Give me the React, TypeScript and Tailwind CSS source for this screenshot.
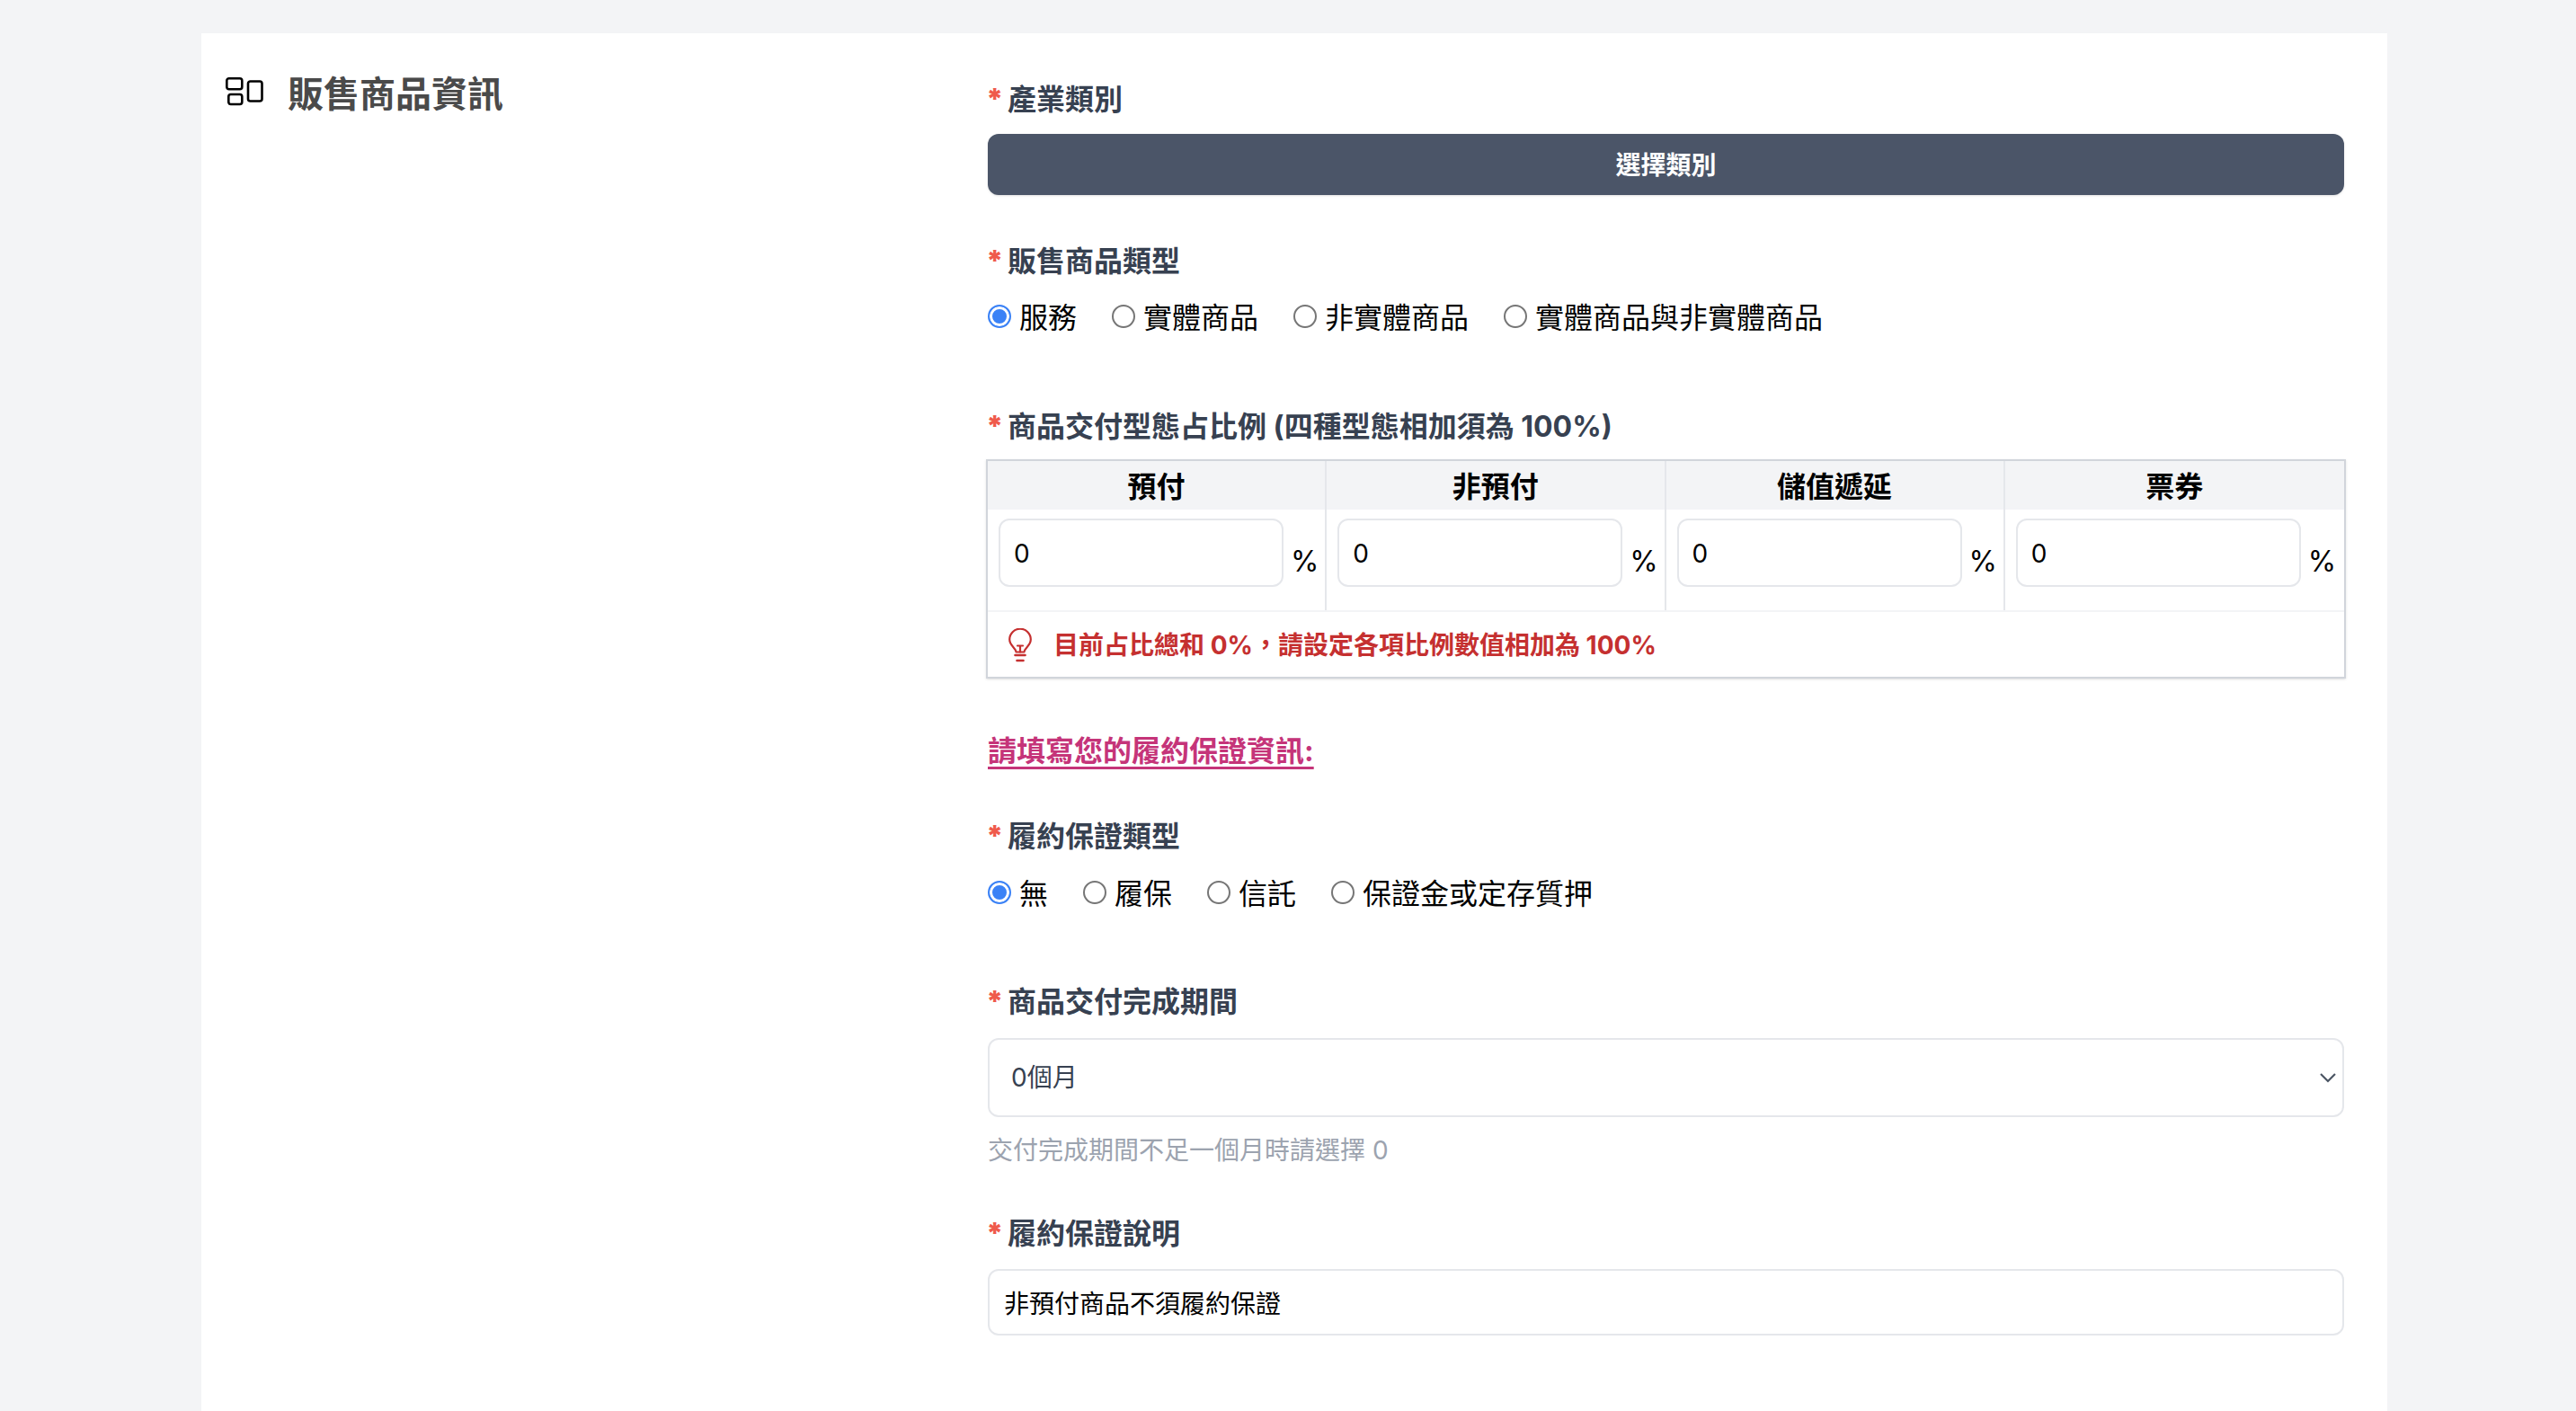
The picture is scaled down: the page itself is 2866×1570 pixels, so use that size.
const Label = ({ text, className = "" }: { text: string; className?: string }) => (
  <div className={`flex h-12 items-center pt-[2px] text-[32px] font-bold text-[#374151] ${className}`}>
    <span className="-ml-[2px] mr-[11px] -mt-[3px] w-[13px] font-black text-[#ef5a4c]">*</span>
    {text}
  </div>
);

const Radio = ({ name, text, checked = false }: { name: string; text: string; checked?: boolean }) => (
  <label className="mr-[39px] flex items-center text-[32px] text-black">
    <input
      type="radio"
      name={name}
      defaultChecked={checked}
      className="mr-[9px] -mt-[1px] h-[26px] w-[26px] appearance-none rounded-full border-2 border-[#767676] bg-white checked:border-[#3b82f6] checked:bg-[#3b82f6] checked:shadow-[inset_0_0_0_3px_#fff]"
    />
    <span className="pt-[3px]">{text}</span>
  </label>
);

const PercentCell = ({ last = false }: { last?: boolean }) => (
  <div className={`flex pb-[26px] pl-3 pt-[10px] ${last ? "border-r-2 border-transparent" : "border-r-2 border-[#e5e7eb]"}`}>
    <input
      defaultValue="0"
      className="h-[76px] w-[317px] shrink-0 rounded-xl border-2 border-[#e5e7eb] bg-white px-[15px] pt-[2px] text-[28px] text-black outline-none"
    />
    <span className="ml-[8px] mt-[24px] text-[32px] leading-[48px] text-black">%</span>
  </div>
);

const heads = ["預付", "非預付", "儲值遞延", "票券"];

export default function App() {
  return (
    <div className="h-screen w-[2866px] overflow-hidden bg-[#f3f4f6] px-[224px] pt-[37px] [font-family:Inter,'Noto_Sans_CJK_TC',sans-serif]">
      <div className="flex h-full w-[2432px] bg-white pr-[48px]">
        <div className="w-[875px] pl-[28px] pt-[38px]">
          <div className="flex h-[60px] items-center">
            <svg width="42" height="32" viewBox="0 0 42 32" fill="none" stroke="#000" strokeWidth="2.6" className="-ml-[1px] mr-[27px] -mt-[6px]">
              <rect x="1.3" y="1.3" width="17" height="12" rx="2.5" />
              <rect x="3.3" y="19" width="15" height="11" rx="2.5" />
              <rect x="25" y="4.5" width="15.5" height="22" rx="2.5" />
            </svg>
            <h2 className="-mt-[1px] text-[40px] font-bold text-[#4a4a4a]">販售商品資訊</h2>
          </div>
        </div>

        <div className="flex-1 pt-[49px]">
          <Label text="產業類別" />
          <button className="mt-[15px] h-[68px] w-full rounded-xl bg-[#4b5568] pt-[2px] text-[28px] font-bold text-white shadow-sm">
            選擇類別
          </button>

          <Label text="販售商品類型" className="mt-[49px]" />
          <div className="mt-[14px] flex h-12">
            <Radio name="kind" text="服務" checked />
            <Radio name="kind" text="實體商品" />
            <Radio name="kind" text="非實體商品" />
            <Radio name="kind" text="實體商品與非實體商品" />
          </div>

          <Label text="商品交付型態占比例 (四種型態相加須為 100%)" className="mt-[74px]" />
          <div className="-mx-[2px] mt-[13px] border-2 border-[#d1d5db] shadow-sm">
            <div className="grid grid-cols-4 bg-[#f3f4f6]">
              {heads.map((h, i) => (
                <div
                  key={h}
                  className={`flex h-[54px] items-center justify-center pt-[3px] text-[32px] font-bold text-black ${i < 3 ? "border-r-2 border-[#e5e7eb]" : ""}`}
                >
                  {h}
                </div>
              ))}
            </div>
            <div className="grid grid-cols-4">
              <PercentCell />
              <PercentCell />
              <PercentCell />
              <PercentCell last />
            </div>
            <div className="flex h-[74px] items-center border-t-2 border-[#f3f4f6] pl-[23px]">
              <svg width="26" height="38" viewBox="0 0 26 38" fill="none" stroke="#c53030" strokeWidth="2.2" strokeLinecap="round" strokeLinejoin="round" className="mr-[24px] mt-[1px]">
                <path d="M8.5 26.5C8 21.5 1.2 19.5 1.2 12.5a11.8 11.8 0 0 1 23.6 0c0 7-6.8 9-7.3 14z" />
                <path d="M10 19.5h6M13 19.5v7" />
                <path d="M7.5 30h11M9.5 36h7" strokeWidth="2.6" />
              </svg>
              <span className="pt-[2px] text-[28px] font-bold text-[#c53030]">目前占比總和 0%，請設定各項比例數值相加為 100%</span>
            </div>
          </div>

          <div className="mt-[56px] flex h-12 items-center pt-[2px]">
            <a className="text-[32px] font-bold text-[#c53479] underline underline-offset-[6px]">請填寫您的履約保證資訊:</a>
          </div>

          <Label text="履約保證類型" className="mt-[47px]" />
          <div className="mt-[15px] flex h-12">
            <Radio name="bond" text="無" checked />
            <Radio name="bond" text="履保" />
            <Radio name="bond" text="信託" />
            <Radio name="bond" text="保證金或定存質押" />
          </div>

          <Label text="商品交付完成期間" className="mt-[73px]" />
          <div className="relative mt-[17px]">
            <select className="h-[88px] w-full appearance-none rounded-xl border-2 border-[#e5e7eb] bg-white pl-[24px] text-[28px] text-[#374151] outline-none">
              <option>0個月</option>
            </select>
            <svg width="18" height="11" viewBox="0 0 18 11" fill="none" stroke="#4b5563" strokeWidth="2.2" className="pointer-events-none absolute right-[9px] top-[39px]">
              <path d="M1 1l8 8 8-8" />
            </svg>
          </div>
          <p className="mt-[15px] pt-[2px] text-[28px] leading-10 text-[#9ca3af]">交付完成期間不足一個月時請選擇 0</p>

          <Label text="履約保證說明" className="mt-[48px]" />
          <input
            defaultValue="非預付商品不須履約保證"
            className="mt-[16px] h-[74px] w-full rounded-xl border-2 border-[#e5e7eb] bg-white pl-[16px] text-[28px] text-black outline-none"
          />
        </div>
      </div>
    </div>
  );
}
